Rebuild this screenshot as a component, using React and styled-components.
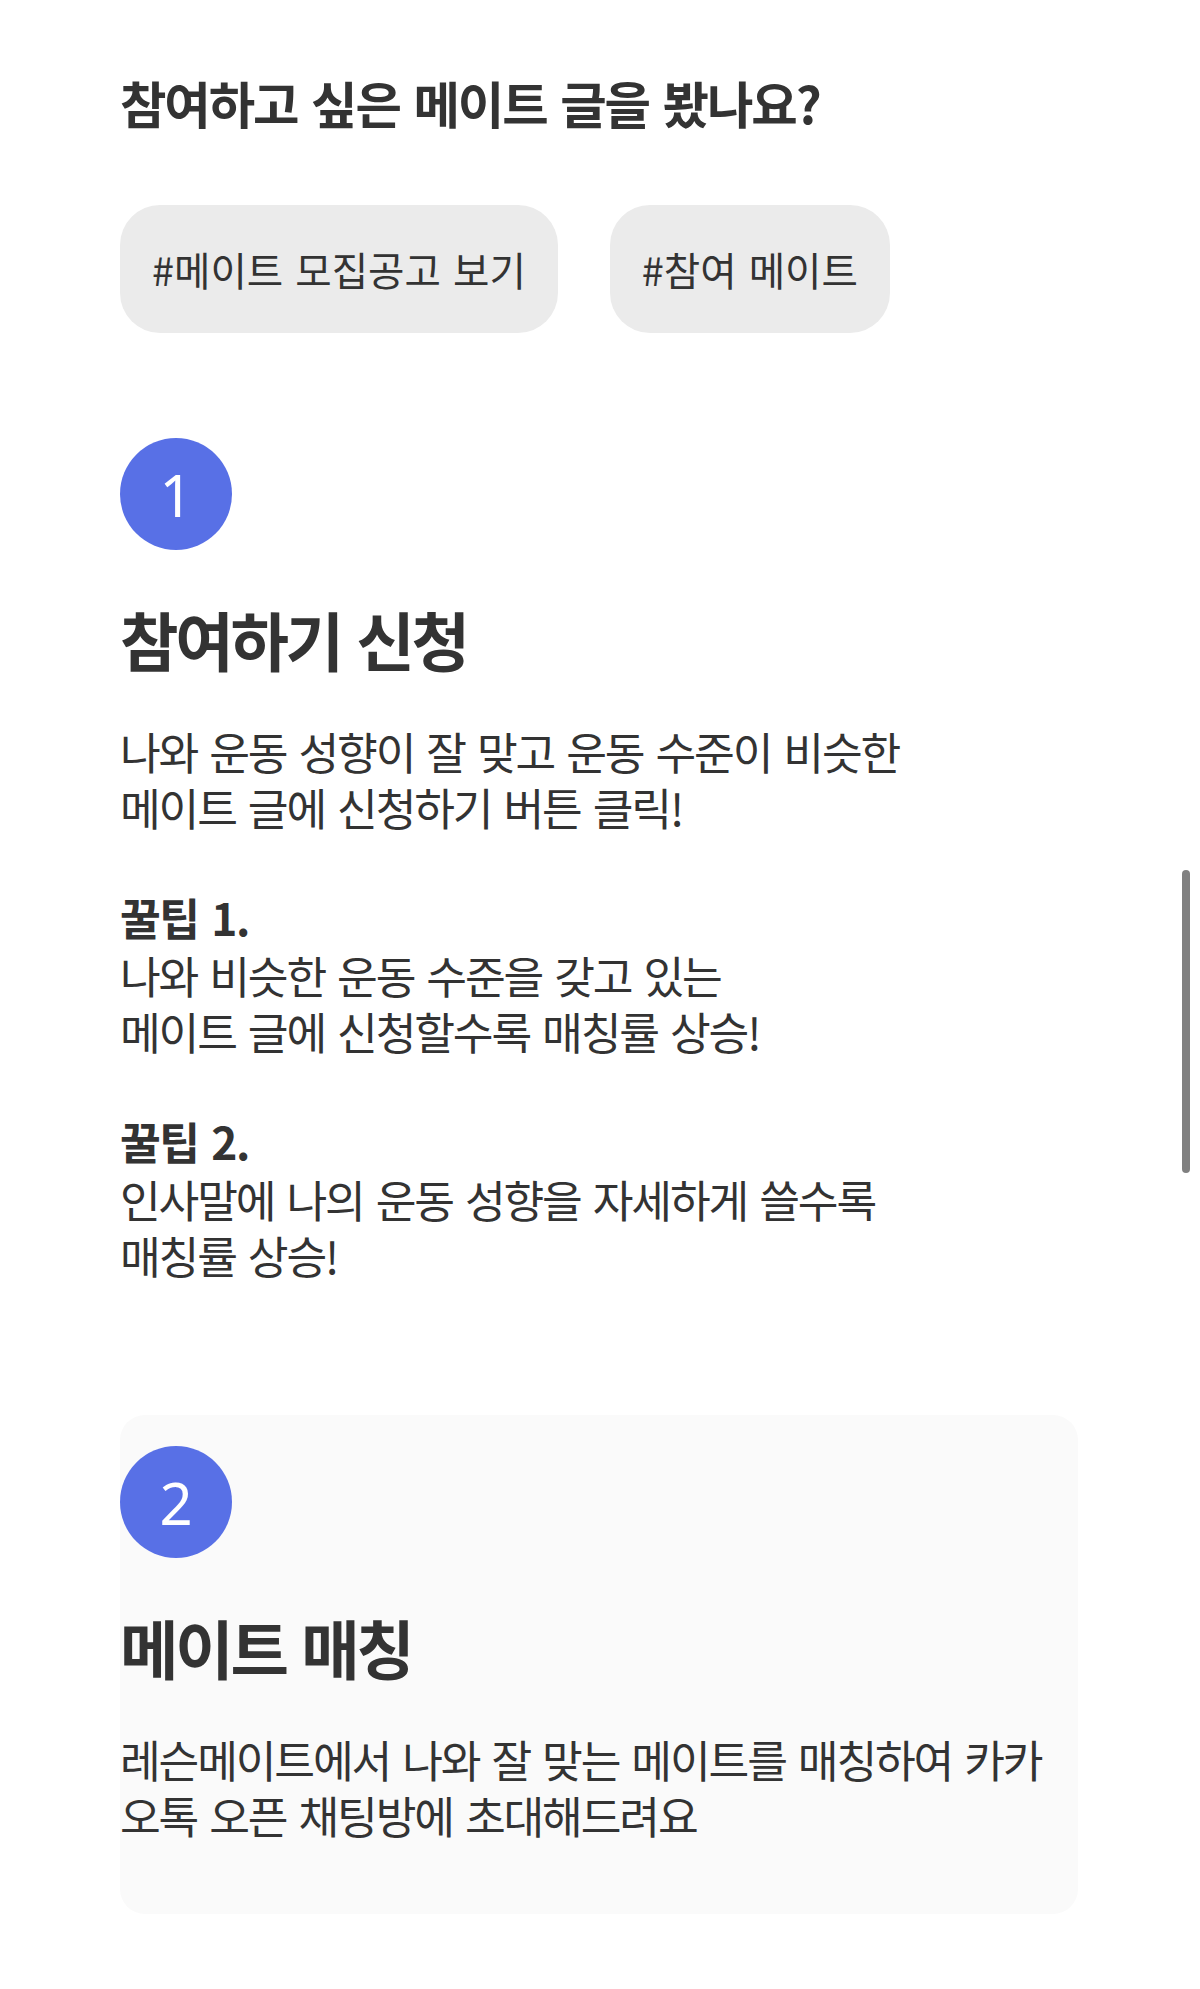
import React from "react";
import styled, { createGlobalStyle } from "styled-components";

const GlobalStyle = createGlobalStyle`
  body {
    margin: 0;
    background: #ffffff;
    font-family: "Noto Sans CJK KR", "Noto Sans", sans-serif;
    color: #333333;
  }
`;

const Page = styled.main`
  padding: 72px 0 80px 120px;
`;

const Heading = styled.h2`
  margin: 0;
  font-size: 50.5px;
  line-height: 60px;
  font-weight: 700;
  letter-spacing: -2.1px;
  word-spacing: 4.3px;
  color: #333333;
`;

const TagRow = styled.div`
  display: flex;
  gap: 52px;
  margin-top: 73px;
`;

const TagButton = styled.button`
  height: 128px;
  padding: 0 32px;
  border: 0;
  border-radius: 40px;
  background: #ebebeb;
  font-family: "Noto Sans CJK KR", sans-serif;
  font-size: 39.6px;
  font-weight: 400;
  line-height: 1;
  word-spacing: 3.2px;
  color: #333333;
`;

const Steps = styled.div`
  display: flex;
  flex-direction: column;
  gap: 61px;
  width: 958px;
  margin-top: 74px;
`;

const StepCard = styled.section`
  padding: 31px 0 71px;
  border-radius: 25px;
  background: ${(p) => (p.$shaded ? "#fafafa" : "transparent")};
`;

const StepNumber = styled.div`
  width: 112px;
  height: 112px;
  border-radius: 50%;
  background: #5870e6;
  color: #ffffff;
  display: flex;
  align-items: center;
  justify-content: center;
  font-family: "Noto Sans", sans-serif;
  font-size: 58px;
  font-weight: 400;
`;

const StepTitle = styled.h3`
  margin: 53px 0 0;
  font-size: 63.6px;
  line-height: 70px;
  font-weight: 700;
  letter-spacing: -3.3px;
  word-spacing: 4.4px;
  color: #333333;
`;

const StepText = styled.div`
  margin-top: 50px;
  font-size: 44.3px;
  line-height: 56px;
  letter-spacing: -2.16px;
  word-spacing: 4.3px;
  color: #333333;
`;

const Tip = styled.div`
  margin-top: 54px;
`;

const TipLabel = styled.strong`
  display: block;
  margin-bottom: 2px;
  font-weight: 700;
  letter-spacing: -1.5px;
`;

const Line = styled.p`
  margin: 0;
`;

const ScrollThumb = styled.div`
  position: fixed;
  top: 870px;
  right: 10px;
  width: 8px;
  height: 303px;
  border-radius: 4px;
  background: #808080;
`;

const tags = ["#메이트 모집공고 보기", "#참여 메이트"];

const steps = [
  {
    no: 1,
    title: "참여하기 신청",
    lines: ["나와 운동 성향이 잘 맞고 운동 수준이 비슷한", "메이트 글에 신청하기 버튼 클릭!"],
    tips: [
      {
        label: "꿀팁 1.",
        lines: ["나와 비슷한 운동 수준을 갖고 있는", "메이트 글에 신청할수록 매칭률 상승!"],
      },
      {
        label: "꿀팁 2.",
        lines: ["인사말에 나의 운동 성향을 자세하게 쓸수록", "매칭률 상승!"],
      },
    ],
  },
  {
    no: 2,
    title: "메이트 매칭",
    shaded: true,
    lines: ["레슨메이트에서 나와 잘 맞는 메이트를 매칭하여 카카", "오톡 오픈 채팅방에 초대해드려요"],
    tips: [],
  },
];

export default function App() {
  return (
    <>
      <GlobalStyle />
      <Page>
        <Heading>참여하고 싶은 메이트 글을 봤나요?</Heading>
        <TagRow>
          {tags.map((t) => (
            <TagButton key={t}>{t}</TagButton>
          ))}
        </TagRow>

        <Steps>
          {steps.map((step) => (
            <StepCard key={step.no} $shaded={step.shaded}>
              <StepNumber>{step.no}</StepNumber>
              <StepTitle>{step.title}</StepTitle>
              <StepText>
                {step.lines.map((l) => (
                  <Line key={l}>{l}</Line>
                ))}
                {step.tips.map((tip) => (
                  <Tip key={tip.label}>
                    <TipLabel>{tip.label}</TipLabel>
                    {tip.lines.map((l) => (
                      <Line key={l}>{l}</Line>
                    ))}
                  </Tip>
                ))}
              </StepText>
            </StepCard>
          ))}
        </Steps>
      </Page>
      <ScrollThumb />
    </>
  );
}
